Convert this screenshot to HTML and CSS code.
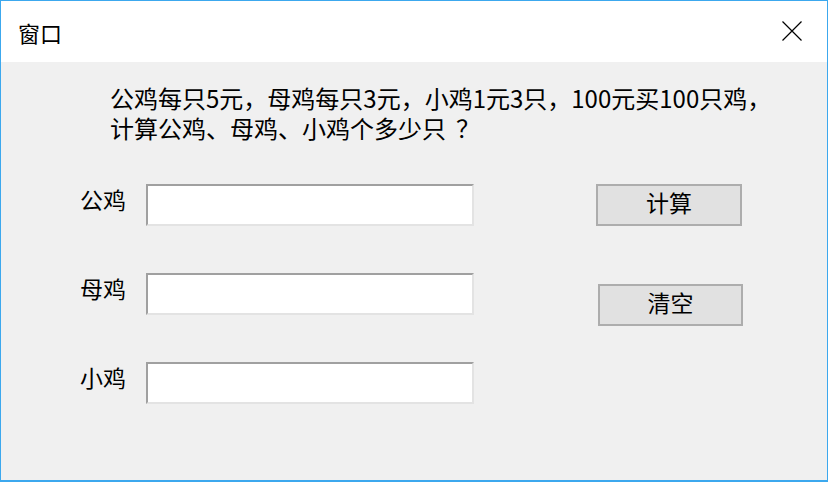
FILE: index.html
```html
<!DOCTYPE html>
<html lang="zh-CN">
<head>
<meta charset="utf-8">
<title>窗口</title>
<link rel="stylesheet" href="styles.css">
</head>
<body>
<div class="window">
  <div class="titlebar">
    <span class="title">窗口</span>
    <svg class="close" width="20" height="20" viewBox="0 0 20 20">
      <path d="M0.5 0.5 L19.5 19.5 M19.5 0.5 L0.5 19.5" stroke="#000" stroke-width="1.2" fill="none"/>
    </svg>
  </div>
  <div class="content">
    <div class="question">
      <div class="qline">公鸡每只5元，母鸡每只3元，小鸡1元3只，100元买100只鸡，</div>
      <div class="qline">计算公鸡、母鸡、小鸡个多少只<span class="qmark">？</span></div>
    </div>
    <div class="form">
      <div class="fields">
        <div class="row"><span class="label">公鸡</span><div class="input"></div></div>
        <div class="row"><span class="label">母鸡</span><div class="input"></div></div>
        <div class="row"><span class="label">小鸡</span><div class="input"></div></div>
      </div>
      <div class="buttons">
        <div class="btn">计算</div>
        <div class="btn btn-second">清空</div>
      </div>
    </div>
  </div>
</div>
</body>
</html>
```
FILE: styles.css
```css
html, body {
  margin: 0;
  padding: 0;
  background: #ffffff;
}
body {
  font-family: "Noto Sans CJK SC", "Noto Sans", sans-serif;
  color: #000;
}
.window {
  width: 828px;
  height: 482px;
  box-sizing: border-box;
  border: 1px solid #3ca8ee;
  border-bottom-width: 2px;
  display: flex;
  flex-direction: column;
}
.titlebar {
  height: 61px;
  background: #fff;
  display: flex;
  align-items: center;
  justify-content: space-between;
  padding: 0 25px 0 17px;
  flex: none;
}
.title {
  font-size: 22px;
  line-height: 30px;
}
.close {
  display: block;
  margin-top: -2px;
}
.content {
  flex: 1;
  background: #f0f0f0;
  padding: 21px 0 0 109px;
}
.question {
  font-size: 24px;
  line-height: 30px;
}
.qline {
  height: 30px;
}
.qmark {
  margin-left: 10px;
}
.form {
  display: flex;
  margin-top: 41px;
  margin-left: -30px;
}
.fields {
  display: flex;
  flex-direction: column;
  gap: 47px;
}
.row {
  display: flex;
  align-items: flex-start;
}
.label {
  width: 66px;
  font-size: 23px;
  line-height: 30px;
  padding-top: 0;
}
.input {
  width: 328px;
  height: 42px;
  box-sizing: border-box;
  background: #fff;
  border: 2px solid;
  border-color: #a0a0a0 #e3e3e3 #e3e3e3 #a0a0a0;
}
.buttons {
  display: flex;
  flex-direction: column;
  margin-left: 122px;
  gap: 58px;
}
.btn {
  width: 146px;
  height: 42px;
  box-sizing: border-box;
  background: #e1e1e1;
  border: 2px solid #adadad;
  display: flex;
  align-items: center;
  justify-content: center;
  font-size: 23px;
  line-height: 30px;
  padding-bottom: 7px;
}
.btn-second {
  margin-left: 2px;
  width: 145px;
}
```
